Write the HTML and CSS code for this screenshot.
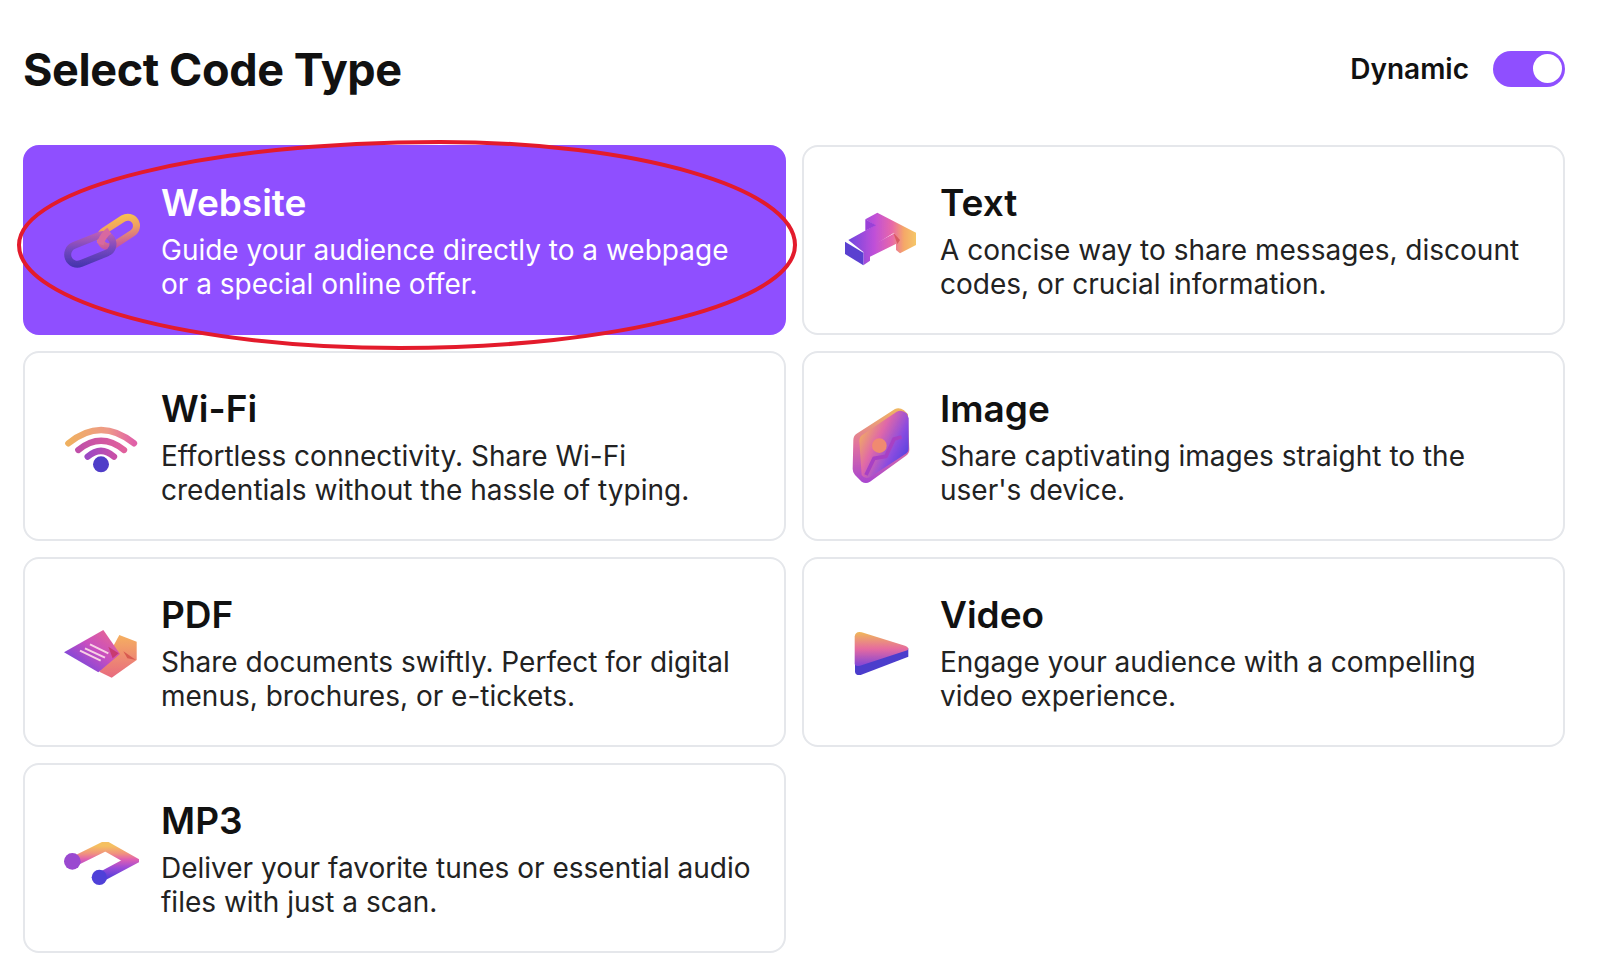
FILE: index.html
```html
<!DOCTYPE html>
<html lang="en">
<head>
<meta charset="utf-8">
<title>Select Code Type</title>
<link rel="stylesheet" href="styles.css">
</head>
<body>
<svg class="defs" width="0" height="0" aria-hidden="true">
  <defs>
    <filter id="soft" x="-10%" y="-10%" width="120%" height="120%"><feGaussianBlur stdDeviation="2.2"/></filter>
    <linearGradient id="mp3" x1="0" y1="0" x2="0" y2="1">
      <stop offset="0" stop-color="#f5c060"/><stop offset=".25" stop-color="#f09080"/><stop offset=".42" stop-color="#e060b0"/><stop offset=".7" stop-color="#9a4ad8"/><stop offset="1" stop-color="#5a40d8"/>
    </linearGradient>
    <linearGradient id="linkLow" x1="0" y1="1" x2="1" y2="0">
      <stop offset="0" stop-color="#4434ac"/><stop offset=".5" stop-color="#7448c0"/><stop offset="1" stop-color="#c060b4"/>
    </linearGradient>
    <linearGradient id="linkUp" x1="0" y1="1" x2="1" y2="0">
      <stop offset="0" stop-color="#c04caa"/><stop offset=".6" stop-color="#f0a060"/><stop offset="1" stop-color="#f7c050"/>
    </linearGradient>
    <linearGradient id="wifiOuter" x1="0" y1="0" x2="1" y2="0">
      <stop offset="0" stop-color="#efb060"/><stop offset=".6" stop-color="#ee9a88"/><stop offset="1" stop-color="#e060a8"/>
    </linearGradient>
    <linearGradient id="wifiMid" x1="0" y1="0" x2="1" y2="0">
      <stop offset="0" stop-color="#c04fa8"/><stop offset="1" stop-color="#e0609c"/>
    </linearGradient>
    <linearGradient id="wifiIn" x1="0" y1="0" x2="1" y2="0">
      <stop offset="0" stop-color="#9c48c4"/><stop offset="1" stop-color="#c850a8"/>
    </linearGradient>
    <linearGradient id="pdfFront" x1="0" y1="1" x2="1" y2="0">
      <stop offset=".1" stop-color="#6a45e0"/><stop offset=".55" stop-color="#c84fc0"/><stop offset="1" stop-color="#ee6a88"/>
    </linearGradient>
    <linearGradient id="pdfBack" x1="0" y1="0" x2="0" y2="1">
      <stop offset="0" stop-color="#f5b060"/><stop offset="1" stop-color="#e86a80"/>
    </linearGradient>
    <linearGradient id="imgFace" x1="0" y1="0" x2="1" y2=".7">
      <stop offset=".12" stop-color="#f2b658"/><stop offset=".45" stop-color="#e068a8"/><stop offset=".75" stop-color="#8a4ce0"/><stop offset="1" stop-color="#5040e0"/>
    </linearGradient>
    <linearGradient id="imgSide" x1="0" y1="0" x2="0" y2="1">
      <stop offset="0" stop-color="#f0b860"/><stop offset=".5" stop-color="#e070a0"/><stop offset="1" stop-color="#a845d0"/>
    </linearGradient>
    <linearGradient id="vidFace" x1="0" y1="0" x2="0" y2="1">
      <stop offset="0" stop-color="#f0b858"/><stop offset=".5" stop-color="#e56aa0"/><stop offset="1" stop-color="#8045d8"/>
    </linearGradient>
    <linearGradient id="tBody" gradientUnits="userSpaceOnUse" x1="80" y1="0" x2="290" y2="0">
      <stop offset="0" stop-color="#6a45e0"/><stop offset=".4" stop-color="#c050d8"/><stop offset=".65" stop-color="#e868a8"/><stop offset=".82" stop-color="#f5a868"/><stop offset="1" stop-color="#f5c868"/>
    </linearGradient>
  </defs>
</svg>

<header class="top">
  <h1 class="heading">Select Code Type</h1>
  <div class="dynamic">
    <span class="dynamic-label">Dynamic</span>
    <span class="toggle"><span class="knob"></span></span>
  </div>
</header>

<main class="grid">
  <article class="card card-active">
    <svg class="icon" viewBox="30 0 240 240" width="80" height="80" aria-hidden="true">
      <g filter="url(#soft)" fill="none" stroke-width="21">
        <rect x="145" y="70" width="120" height="52" rx="26" transform="rotate(-33 205 96)" stroke="url(#linkUp)"/>
        <rect x="50" y="119" width="142" height="58" rx="29" transform="rotate(-22 121 148)" stroke="url(#linkLow)"/>
        <path d="M150 132 Q160 104 178 92" stroke="#d868a0"/>
      </g>
    </svg>
    <div class="copy">
      <h2 class="card-title">Website</h2>
      <p class="card-text">Guide your audience directly to a webpage<br>or a special online offer.</p>
    </div>
  </article>

  <article class="card">
    <svg class="icon" viewBox="57 30 240 240" width="80" height="80" aria-hidden="true">
      <g filter="url(#soft)">
        <path d="M130 180 L232 125 L232 160 L150 200 L150 212 L130 226 Z" fill="url(#tBody)"/>
        <path d="M228 140 L288 128 L288 165 L240 190 L228 180 Z" fill="url(#tBody)"/>
        <path d="M85 150 L165 106 L136 88 L172 68 L288 128 L240 155 L222 128 L130 186 Z" fill="url(#tBody)"/>
        <path d="M75 155 L130 188 L130 226 L75 192 Z" fill="#5a40d0"/>
        <path d="M136 88 L136 122 L168 106 Z" fill="#9a40d8"/>
        <path d="M220 128 L240 150 L232 162 Z" fill="#d85a60"/>
      </g>
    </svg>
    <div class="copy">
      <h2 class="card-title">Text</h2>
      <p class="card-text">A concise way to share messages, discount<br>codes, or crucial information.</p>
    </div>
  </article>

  <article class="card">
    <svg class="icon" viewBox="60 18 240 240" width="80" height="80" aria-hidden="true">
      <g filter="url(#soft)" fill="none" stroke-linecap="round" stroke-width="19">
        <path d="M85 130 Q183 50 282 130" stroke="url(#wifiOuter)"/>
        <path d="M115 150 Q183 95 252 150" stroke="url(#wifiMid)"/>
        <path d="M143 170 Q183 135 222 170" stroke="url(#wifiIn)"/>
        <circle cx="183" cy="193" r="24" fill="#4f3cc8" stroke="none"/>
      </g>
    </svg>
    <div class="copy">
      <h2 class="card-title">Wi-Fi</h2>
      <p class="card-text">Effortless connectivity. Share Wi-Fi<br>credentials without the hassle of typing.</p>
    </div>
  </article>

  <article class="card">
    <svg class="icon" viewBox="27 33 240 240" width="80" height="80" aria-hidden="true">
      <g filter="url(#soft)">
        <path d="M70 135 Q70 122 82 115 L195 42 Q208 36 222 46 L234 58 L238 165 Q238 175 228 182 L120 260 Q108 268 95 260 L75 240 Q68 232 68 222 Z" fill="url(#imgSide)"/>
        <path d="M88 138 Q88 125 100 118 L200 50 Q215 42 230 55 L236 70 L236 160 Q236 172 225 178 L122 245 Q105 255 95 240 Z" fill="url(#imgFace)"/>
        <circle cx="148" cy="152" r="22" fill="#f08a70"/>
        <path d="M108 240 L132 190 L168 184 L192 132 L215 126" fill="none" stroke="#a840c4" stroke-width="11" stroke-linejoin="round"/>
      </g>
    </svg>
    <div class="copy">
      <h2 class="card-title">Image</h2>
      <p class="card-text">Share captivating images straight to the<br>user's device.</p>
    </div>
  </article>

  <article class="card">
    <svg class="icon" viewBox="60 6 240 240" width="80" height="80" aria-hidden="true">
      <g filter="url(#soft)">
        <path d="M238 75 L290 95 L290 150 L215 203 L178 185 Z" fill="url(#pdfBack)"/>
        <path d="M72 127 L190 60 L240 132 L175 187 Z" fill="url(#pdfFront)"/>
        <path d="M205 110 L236 130 L218 145 Z" fill="#c83a70"/>
        <path d="M250 124 L288 150 L262 145 Z" fill="#d85a50"/>
        <path d="M150 103 L205 130 M135 115 L195 143 M120 122 L182 152" stroke="#f8d0e4" stroke-width="6" fill="none"/>
      </g>
    </svg>
    <div class="copy">
      <h2 class="card-title">PDF</h2>
      <p class="card-text">Share documents swiftly. Perfect for digital<br>menus, brochures, or e-tickets.</p>
    </div>
  </article>

  <article class="card">
    <svg class="icon" viewBox="27 -9 240 240" width="80" height="80" aria-hidden="true">
      <g filter="url(#soft)">
        <path d="M75 140 L235 100 L235 125 L92 180 Q76 182 75 170 Z" fill="#4c3ccc"/>
        <path d="M74 65 Q76 48 95 52 L225 92 Q240 98 232 106 L90 152 Q74 156 74 145 Z" fill="url(#vidFace)"/>
      </g>
    </svg>
    <div class="copy">
      <h2 class="card-title">Video</h2>
      <p class="card-text">Engage your audience with a compelling<br>video experience.</p>
    </div>
  </article>

  <article class="card">
    <svg class="icon" viewBox="60 -6 240 240" width="80" height="80" aria-hidden="true">
      <g filter="url(#soft)">
        <path d="M100 125 L196 78 L274 122 L180 172" fill="none" stroke="url(#mp3)" stroke-width="30" stroke-linejoin="miter"/>
        <circle cx="97" cy="124" r="25" fill="#9a48d0"/>
        <circle cx="178" cy="172" r="23" fill="#5040d8"/>
      </g>
    </svg>
    <div class="copy">
      <h2 class="card-title">MP3</h2>
      <p class="card-text">Deliver your favorite tunes or essential audio<br>files with just a scan.</p>
    </div>
  </article>
</main>

<svg class="scribble" width="800" height="220" viewBox="0 0 800 220" aria-hidden="true">
  <path d="M12 108 C12 51 201 5 433 5 C629 5 788 51 788 108 C788 165 611 211 393 211 C183 211 12 165 12 108 Z" fill="none" stroke="#e31b2c" stroke-width="4"/>
</svg>
</body>
</html>
```

FILE: styles.css
```css
* { box-sizing: border-box; }

html, body {
  margin: 0;
  padding: 0;
  background: #fff;
}

body {
  position: relative;
  width: 1599px;
  height: 969px;
  overflow: hidden;
  font-family: "Inter", "Liberation Sans", sans-serif;
  color: #111;
}

.defs { position: absolute; }

.top {
  height: 145px;
  padding: 0 34px 8px 23px;
  display: flex;
  align-items: center;
  justify-content: space-between;
}

.heading {
  margin: 2px 0 0;
  font-size: 45px;
  font-weight: 700;
  line-height: 1.2;
  letter-spacing: -0.4px;
}

.dynamic {
  display: flex;
  align-items: center;
  gap: 24px;
}

.dynamic-label {
  font-size: 28px;
  font-weight: 600;
}

.toggle {
  width: 72px;
  height: 36px;
  border-radius: 18px;
  background: #8f4fff;
  display: flex;
  align-items: center;
  justify-content: flex-end;
  padding-right: 3px;
}

.knob {
  width: 29px;
  height: 29px;
  border-radius: 50%;
  background: #fff;
}

.grid {
  margin-left: 23px;
  width: 1542px;
  display: grid;
  grid-template-columns: 763px 763px;
  grid-auto-rows: 190px;
  gap: 16px;
}

.card {
  display: flex;
  align-items: center;
  gap: 21px;
  padding-left: 35px;
  border: 2px solid #e5e7eb;
  border-radius: 16px;
  background: #fff;
}

.card-active {
  background: #8f4fff;
  border-color: #8f4fff;
  color: #fff;
}

.icon { flex: none; }

.copy {
  min-width: 0;
  padding-top: 2px;
}

.card-title {
  margin: 0 0 8px;
  font-size: 37px;
  font-weight: 600;
  line-height: 44px;
}

.card-text {
  margin: 0;
  font-size: 28px;
  font-weight: 400;
  line-height: 34px;
  color: #222;
}

.card-active .card-text { color: #fff; }

.scribble {
  position: absolute;
  left: 7px;
  top: 137px;
}
```
